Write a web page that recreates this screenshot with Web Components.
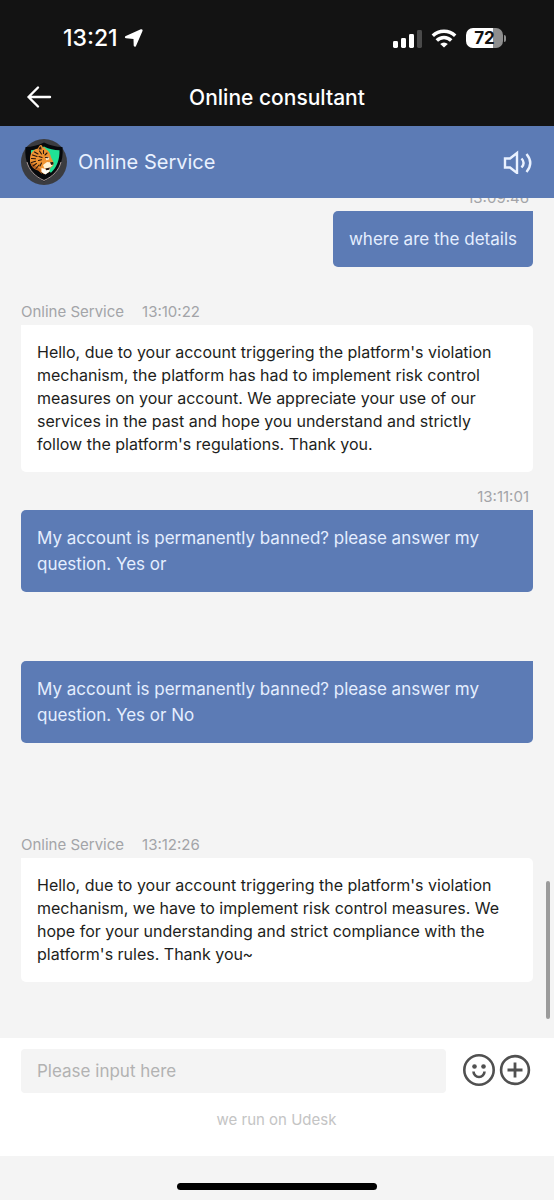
<!DOCTYPE html>
<html lang="en">
<head>
<meta charset="UTF-8">
<meta name="viewport" content="width=device-width, initial-scale=1">
<title>Online consultant</title>
<style>
  html, body {
    margin: 0;
    height: 100%;
  }

  body {
    background: #f4f4f4;
    font-family: Inter, "Liberation Sans", sans-serif;
    font-size: 16px;
  }
</style>
</head>
<body>
<chat-app>
  <status-bar time="13:21" battery="72"></status-bar>
  <nav-bar>Online consultant</nav-bar>
  <service-bar>Online Service</service-bar>
  <message-list>
    <chat-message from="me" time="13:09:46">where are the details</chat-message>
    <chat-message from="agent" name="Online Service" time="13:10:22" class="reply">Hello, due to your account triggering the platform's violation mechanism, the platform has had to implement risk control measures on your account. We appreciate your use of our services in the past and hope you understand and strictly follow the platform's regulations. Thank you.</chat-message>
    <chat-message from="me" time="13:11:01" class="question">My account is permanently banned? please answer my question. Yes or</chat-message>
    <chat-message from="me" class="repeat">My account is permanently banned? please answer my question. Yes or No</chat-message>
    <chat-message from="agent" name="Online Service" time="13:12:26" class="late">Hello, due to your account triggering the platform's violation mechanism, we have to implement risk control measures. We hope for your understanding and strict compliance with the platform's rules. Thank you~</chat-message>
  </message-list>
  <message-composer placeholder="Please input here">we run on Udesk</message-composer>
  <home-indicator></home-indicator>
</chat-app>

<script>
class ChatApp extends HTMLElement {
  constructor() {
    super();
    this.attachShadow({ mode: "open" });
    this.shadowRoot.innerHTML = `
      <style>
        :host {
          display: flex;
          flex-direction: column;
          height: 100vh;
          overflow: hidden;
        }
        ::slotted(*) {
          flex: none;
        }
        ::slotted(message-list) {
          flex: 1;
          min-height: 0;
        }
      </style>
      <slot></slot>
    `;
  }
}

class StatusBar extends HTMLElement {
  constructor() {
    super();
    this.attachShadow({ mode: "open" });
    this.render();
  }

  render() {
    this.shadowRoot.innerHTML = `
      <style>
        :host {
          display: flex;
          align-items: center;
          justify-content: space-between;
          box-sizing: border-box;
          height: 72px;
          padding: 4px 48px 0 63px;
          background: #131313;
          color: #fff;
        }
        .left, .right {
          display: flex;
          align-items: center;
        }
        .left {
          gap: 6px;
          font-size: 23px;
          font-weight: 500;
        }
        .right {
          gap: 9px;
        }
        .battery {
          display: flex;
          align-items: center;
          gap: 1px;
        }
        .level {
          width: 37px;
          border-radius: 7px;
          background: linear-gradient(to right, #fff 72%, #8e8e8e 72%);
          color: #131313;
          font-size: 17px;
          font-weight: 700;
          line-height: 20px;
          text-align: center;
        }
        .cap {
          width: 2px;
          height: 7px;
          border-radius: 0 2px 2px 0;
          background: #8e8e8e;
        }
        svg {
          display: block;
        }
      </style>
      <div class="left">
        <span>${this.getAttribute("time")}</span>
        <svg width="20" height="20" viewBox="0 0 20 20" fill="#fff" aria-hidden="true">
          <path d="M1.8 8 16.8 1.300c1.300-.5 2.200.4 1.700 1.700L12 17.900c-.6 1.300-2.200 1.100-2.300-.3l-.2-6.600-7.400-.7c-1.500-.2-1.600-1.700-.3-2.300z"/>
        </svg>
      </div>
      <div class="right">
        <svg width="29" height="19" viewBox="0 0 29 19" fill="#fff" aria-hidden="true">
          <rect x="0" y="12" width="5" height="7" rx="1.4"/>
          <rect x="8" y="9" width="5" height="10" rx="1.4"/>
          <rect x="16" y="5" width="5" height="14" rx="1.4"/>
          <rect x="24" y="1" width="5" height="18" rx="1.4" fill="#4a4a4a"/>
        </svg>
        <svg width="26" height="19" viewBox="0 0 26 19" fill="none" stroke="#fff" stroke-width="3.4" aria-hidden="true">
          <path d="M1.800 6.800a16 16 0 0 1 22.400 0"/>
          <path d="M5.800 11.500a10 10 0 0 1 14.400 0"/>
          <path d="M9.200 14.900a5.500 5.500 0 0 1 7.600 0L13 18.600z" fill="#fff" stroke="none"/>
        </svg>
        <div class="battery">
          <div class="level">${this.getAttribute("battery")}</div>
          <div class="cap"></div>
        </div>
      </div>
    `;
  }
}

class NavBar extends HTMLElement {
  constructor() {
    super();
    this.attachShadow({ mode: "open" });
    this.shadowRoot.innerHTML = `
      <style>
        :host {
          display: grid;
          grid-template-columns: 48px 1fr 48px;
          align-items: center;
          box-sizing: border-box;
          height: 54px;
          padding: 0 15px 4px;
          background: #131313;
          color: #fff;
        }
        button {
          display: flex;
          justify-content: center;
          padding: 8px 0;
          border: none;
          background: none;
          cursor: pointer;
        }
        h1 {
          margin: 0;
          font-size: 21px;
          font-weight: 500;
          text-align: center;
        }
      </style>
      <button aria-label="Back">
        <svg width="26" height="24" viewBox="0 0 26 24" fill="none" stroke="#fff" stroke-width="2.4" stroke-linecap="round" stroke-linejoin="round">
          <path d="M12 2.5 2.5 12l9.500 9.500M2.500 12H24"/>
        </svg>
      </button>
      <h1><slot></slot></h1>
    `;
  }
}

class ServiceBar extends HTMLElement {
  constructor() {
    super();
    this.attachShadow({ mode: "open" });
    this.shadowRoot.innerHTML = `
      <style>
        :host {
          display: flex;
          align-items: center;
          gap: 11px;
          height: 72px;
          padding: 0 21px;
          background: #5c7bb5;
          color: #e9f1ff;
        }
        h2 {
          flex: 1;
          margin: 0;
          font-size: 20px;
          font-weight: 400;
        }
        button {
          padding: 0;
          border: none;
          background: none;
          cursor: pointer;
        }
        svg {
          display: block;
        }
      </style>
      <svg width="46" height="46" viewBox="0 0 46 46" aria-hidden="true">
        <circle cx="23" cy="23" r="23" fill="#3b3c40"/>
        <path d="M23 3.500c6 3 12 4.300 18.500 4.500 1.500 15-4.500 27.500-18.500 34.500C9 35.500 3 23 4.500 8 11 7.800 17 6.500 23 3.500z" fill="#07090c"/>
        <path d="M6 23c2 8 8 14.500 17 18.500C32 37.500 38 31 40 23" fill="none" stroke="#a89a98" stroke-width="1"/>
        <path d="M10 11.200c5-.2 9-1.500 13-3.700 5 2.500 10 3.700 15.500 3.700.3 9-2.500 17-8.500 22.500L10 20z" fill="#20e296"/>
        <path d="M9 20c0-5.500 3-9.500 8-10.500 1-2.500 2-3.800 3.200-3.500 1 .3 1.300 1.500 1.600 2.800 1.300-.8 2.600-.4 2.700 1.200 2.800 1.200 4.500 3.800 5.200 7.200.5 2.500 2.800 4.700 2.800 7.200 0 2-1.500 3.600-3 4.300l-1.500 4.500-5 2-5-4.200C12 30 8.500 26 9 20z" fill="#ee9232"/>
        <path d="M9.500 23c.5 4 3 7.500 7.500 8.500l4 3.500-1.500-5-4-2.500z" fill="#bd641f"/>
        <path d="M17.500 10.500c.5-2 1.500-3.500 2.500-3l.7 3z" fill="#382012"/>
        <path d="M24.500 18.500l3-.8.8 2.500-3 1zM22 26l4-3 4.500.5 1 3-3.500 2.500-4.500.5z" fill="#fff0d2"/>
        <path d="M29 23.200l3.200-.2.300 2.200-2.300.9z" fill="#24150f"/>
        <path d="M20.500 29l4 1 4.500-1.500-.5 4-4 3-4-2.500z" fill="#fffdf6"/>
        <path d="M24.500 29.500l4.500-1-.8 2.300-3.200.5z" fill="#24100d"/>
        <path d="M13.500 13l3.500 2M11.500 16l4.500 1.500M10.500 19.500l4 .3M10.500 23.500l4-1.200M12 27l3.500-2.500M15 29.500l3-3.500M18.500 12l2 3M22.500 11.500v3M26 14l-2 2M18 17.500l3 1M17.500 21.500l3-.8M20.500 24l-1.500 3M24.500 18.500l2.500.3" stroke="#24150f" stroke-width="1.100" stroke-linecap="round"/>
      </svg>
      <h2><slot></slot></h2>
      <button aria-label="Sound">
        <svg width="30" height="24" viewBox="0 0 30 24" fill="none" stroke="#e9f1ff" stroke-width="2.400">
          <path d="M2 8.500h5L14 3v20l-7-5.500H2z"/>
          <path d="M18.500 8.500q4.200 4.500 0 9M23.500 4q7.500 9 0 18"/>
        </svg>
      </button>
    `;
  }
}

class MessageList extends HTMLElement {
  constructor() {
    super();
    this.attachShadow({ mode: "open" });
    this.shadowRoot.innerHTML = `
      <style>
        :host {
          display: flex;
          flex-direction: column;
          justify-content: flex-end;
          box-sizing: border-box;
          position: relative;
          overflow: hidden;
          padding: 0 21px 56px;
          background: #f4f4f4;
        }
        ::slotted(*) {
          flex: none;
        }
        ::slotted(.reply) {
          margin-top: 32px;
        }
        ::slotted(.question) {
          margin-top: 12px;
        }
        ::slotted(.repeat) {
          margin-top: 69px;
        }
        ::slotted(.late) {
          margin-top: 89px;
        }
        .thumb {
          position: absolute;
          right: 4px;
          bottom: 19px;
          width: 4px;
          height: 138px;
          border-radius: 2px;
          background: #9b9b9b;
        }
      </style>
      <slot></slot>
      <div class="thumb"></div>
    `;
  }
}

class ChatMessage extends HTMLElement {
  constructor() {
    super();
    this.attachShadow({ mode: "open" });
    this.render();
  }

  render() {
    const name = this.getAttribute("name");
    const time = this.getAttribute("time");
    this.shadowRoot.innerHTML = `
      <style>
        :host {
          display: flex;
          flex-direction: column;
          align-items: flex-start;
        }
        :host([from="me"]) {
          align-items: flex-end;
        }
        .meta {
          display: flex;
          gap: 18px;
          color: #a3a4a8;
          font-size: 15px;
          line-height: 26px;
        }
        :host([from="me"]) .meta {
          padding-right: 4px;
        }
        .bubble {
          padding: 16px;
          border-radius: 0 5px 5px 5px;
          background: #fff;
          color: #1d1e20;
          line-height: 23px;
        }
        :host([from="me"]) .bubble {
          padding: 15px 16px;
          border-radius: 5px 0 5px 5px;
          background: #5c7bb5;
          color: #e4eeff;
          font-size: 17px;
          line-height: 26px;
        }
      </style>
      ${
        time
          ? `<div class="meta">${name ? `<span>${name}</span>` : ""}<time>${time}</time></div>`
          : ""
      }
      <div class="bubble"><slot></slot></div>
    `;
  }
}

class MessageComposer extends HTMLElement {
  constructor() {
    super();
    this.attachShadow({ mode: "open" });
    this.render();
  }

  render() {
    this.shadowRoot.innerHTML = `
      <style>
        :host {
          display: block;
          box-sizing: border-box;
          height: 118px;
          padding: 11px 22px 0 21px;
          background: #fff;
        }
        .row {
          display: flex;
          align-items: center;
          gap: 16px;
        }
        input {
          flex: 1;
          min-width: 0;
          height: 44px;
          box-sizing: border-box;
          padding: 0 16px;
          border: none;
          border-radius: 4px;
          background: #f4f4f4;
          color: #1d1e20;
          font: inherit;
          font-size: 17px;
        }
        input::placeholder {
          color: #b2b2b2;
          opacity: 1;
        }
        .actions {
          display: flex;
          gap: 2px;
        }
        button {
          padding: 0;
          border: none;
          background: none;
          cursor: pointer;
        }
        svg {
          display: block;
        }
        p {
          margin: 17px 0 0;
          color: #c4c4c4;
          font-size: 15px;
          line-height: 20px;
          text-align: center;
        }
      </style>
      <div class="row">
        <input type="text" aria-label="Message" placeholder="${this.getAttribute("placeholder")}">
        <div class="actions">
          <button aria-label="Emoji">
            <svg width="34" height="34" viewBox="0 0 34 34" fill="none" stroke="#505050" stroke-width="2.600">
              <circle cx="17" cy="16" r="14.700"/>
              <path d="M11.500 17.500a5.500 5.500 0 0 0 11 0"/>
              <circle cx="12.500" cy="12.500" r="2.300" fill="#505050" stroke="none"/>
              <circle cx="21.500" cy="12.500" r="2.300" fill="#505050" stroke="none"/>
            </svg>
          </button>
          <button aria-label="More">
            <svg width="34" height="34" viewBox="0 0 34 34" fill="none" stroke="#505050" stroke-width="2.600">
              <circle cx="17" cy="16" r="13.900"/>
              <path d="M17 8.500v15M9.500 16h15" stroke-width="2.800"/>
            </svg>
          </button>
        </div>
      </div>
      <p><slot></slot></p>
    `;
  }
}

class HomeIndicator extends HTMLElement {
  constructor() {
    super();
    this.attachShadow({ mode: "open" });
    this.shadowRoot.innerHTML = `
      <style>
        :host {
          display: flex;
          justify-content: center;
          align-items: flex-end;
          box-sizing: border-box;
          height: 44px;
          padding-bottom: 10px;
          background: #f4f4f4;
        }
        div {
          width: 36%;
          height: 7px;
          border-radius: 4px;
          background: #000;
        }
      </style>
      <div></div>
    `;
  }
}

customElements.define("chat-app", ChatApp);
customElements.define("status-bar", StatusBar);
customElements.define("nav-bar", NavBar);
customElements.define("service-bar", ServiceBar);
customElements.define("message-list", MessageList);
customElements.define("chat-message", ChatMessage);
customElements.define("message-composer", MessageComposer);
customElements.define("home-indicator", HomeIndicator);
</script>
</body>
</html>
